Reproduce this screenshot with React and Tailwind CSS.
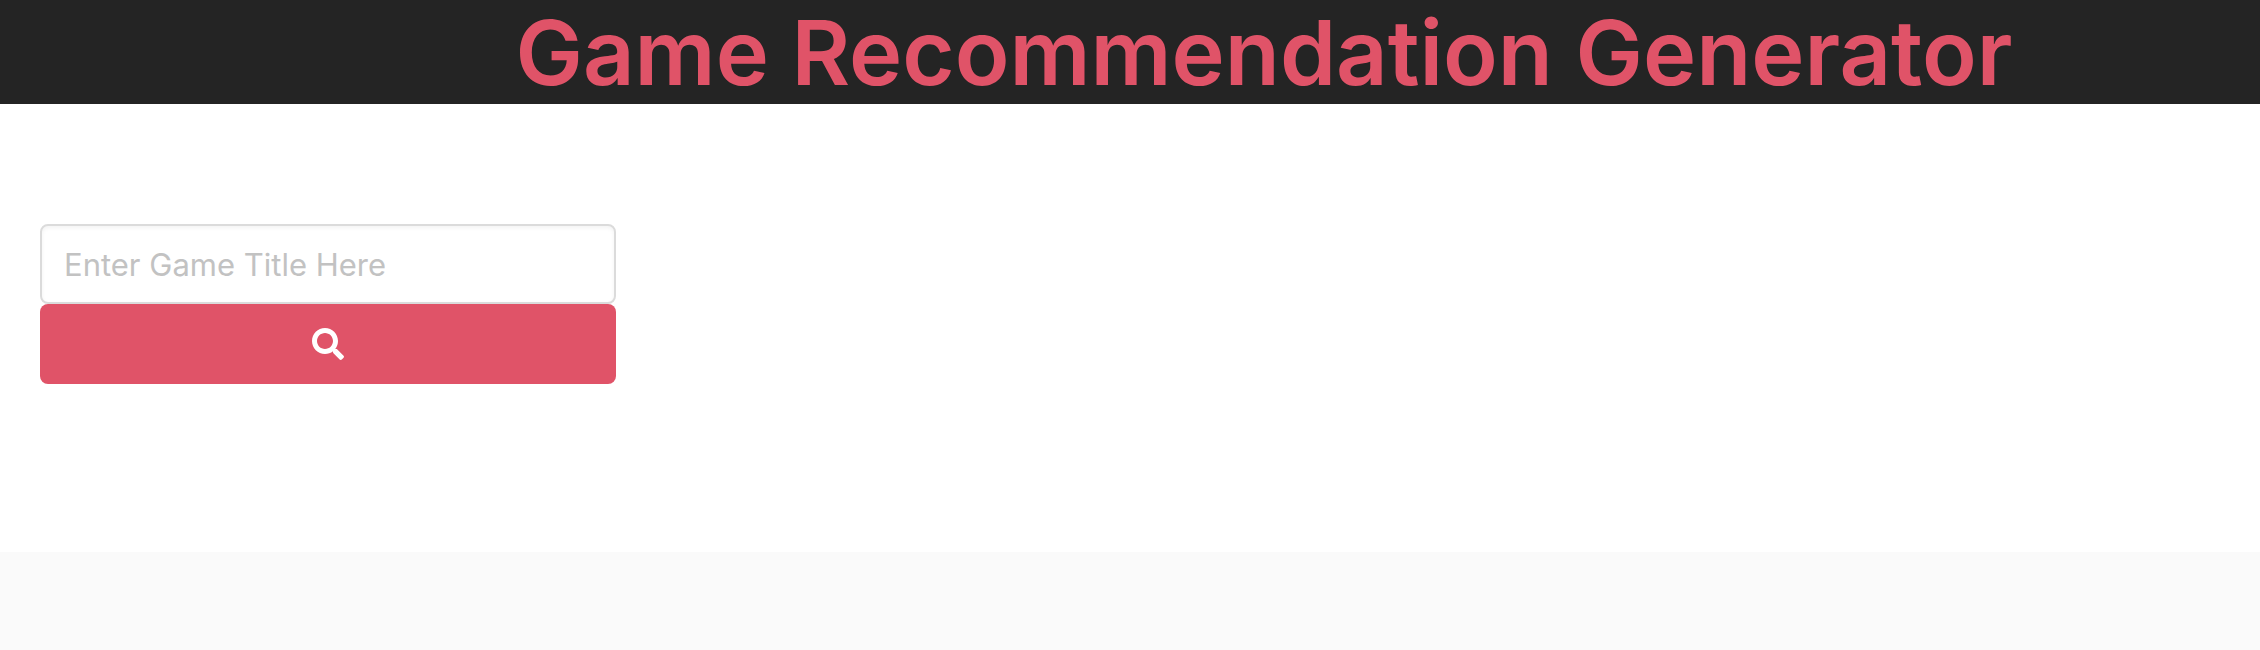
import { FaSearch } from "react-icons/fa";

export default function App() {
  return (
    <div className="bg-white font-['Inter',sans-serif]">
      <header className="flex items-center justify-center bg-[#242424] pt-0.5 pl-[268px]">
        <h1 className="text-[90px] leading-[102px] font-semibold text-[#e05368]">
          Game Recommendation Generator
        </h1>
      </header>
      <main className="px-10 pt-[120px] pb-[168px]">
        <form className="flex max-w-[576px] flex-col" onSubmit={(e) => e.preventDefault()}>
          <input
            type="text"
            aria-label="Game title"
            placeholder="Enter Game Title Here"
            className="h-20 rounded-lg border-2 border-[#dbdbdb] bg-white px-[22px] text-[31px] text-[#363636] shadow-[inset_0_2px_4px_rgba(10,10,10,0.05)] placeholder:text-[#c2c2c2]"
          />
          <button type="submit" aria-label="Search" className="flex h-20 items-center justify-center rounded-lg bg-[#e05368] text-white">
            <FaSearch className="size-8" />
          </button>
        </form>
      </main>
      <footer className="h-[98px] bg-[#fafafa]" />
    </div>
  );
}
